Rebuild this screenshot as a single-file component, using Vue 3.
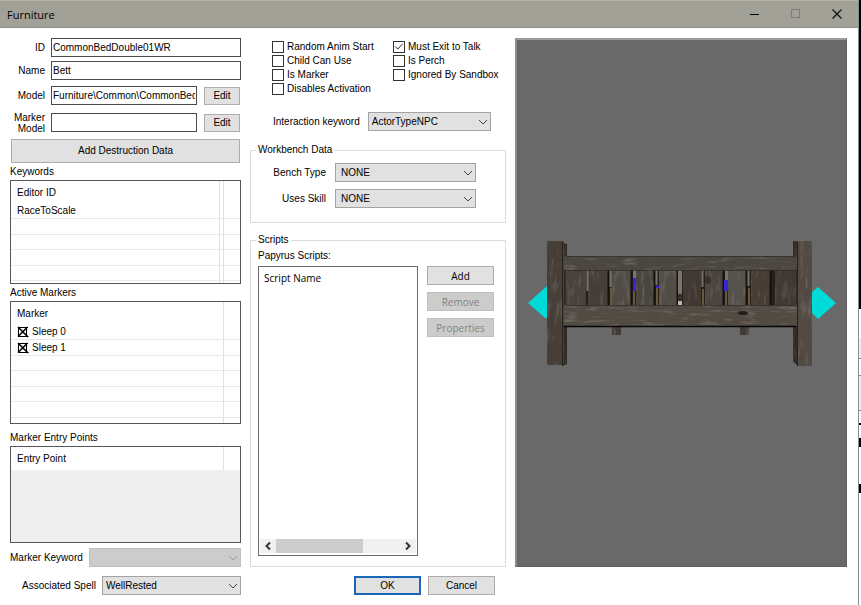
<script setup>
import { ref } from 'vue'

const form = ref({
  id: 'CommonBedDouble01WR',
  name: 'Bett',
  model: 'Furniture\\Common\\CommonBedDouble01.nif',
  markerModel: '',
})

const flags = ref([
  { label: 'Random Anim Start', on: false },
  { label: 'Must Exit to Talk', on: true },
  { label: 'Child Can Use', on: false },
  { label: 'Is Perch', on: false },
  { label: 'Is Marker', on: false },
  { label: 'Ignored By Sandbox', on: false },
  { label: 'Disables Activation', on: false },
])

const keywords = ['RaceToScale', '', '', '', '', '']
const markers = ['Sleep 0', 'Sleep 1', '', '', '', '', '']

// Headboard planks: left edge, width and shade
const planks = [
  [566, 20, '#49423c'], [588, 20, '#453e38'], [611, 20, '#514b45'],
  [636, 19, '#4b453f'], [659, 18, '#524c46'], [683, 18, '#403831'],
  [705, 18, '#4a443f'], [728, 19, '#55514b'], [751, 20, '#463e36'], [775, 21, '#403831'],
]
const gaps = [609, 632, 655, 678, 724, 747, 771]
</script>

<template>
  <div class="screen">
    <main class="dialog">
      <header class="titlebar">
        <h1>Furniture</h1>
        <button class="winbtn" type="button" aria-label="Minimize">
          <svg width="12" height="12" viewBox="0 0 12 12"><path d="M1 6.500h9" stroke="#000" /></svg>
        </button>
        <button class="winbtn" type="button" aria-label="Maximize" disabled>
          <svg width="12" height="12" viewBox="0 0 12 12"><rect x="1.500" y="1.500" width="8" height="8" fill="none" stroke="#7d7d75" /></svg>
        </button>
        <button class="winbtn" type="button" aria-label="Close">
          <svg width="12" height="12" viewBox="0 0 12 12"><path d="M1.500 1.500l9 9M10.500 1.500l-9 9" stroke="#111" stroke-width="1.200" /></svg>
        </button>
      </header>

      <form class="content" @submit.prevent>
        <section class="left">
          <div class="fields plain">
            <label for="fid">ID</label><input id="fid" v-model="form.id" type="text" />
            <label for="fname">Name</label><input id="fname" v-model="form.name" type="text" />
          </div>
          <div class="fields paths">
            <label for="fmodel">Model</label><input id="fmodel" v-model="form.model" type="text" />
            <button class="btn" type="button">Edit</button>
            <label for="fmarker">Marker Model</label><input id="fmarker" v-model="form.markerModel" type="text" />
            <button class="btn" type="button">Edit</button>
          </div>
          <button class="btn destruction" type="button">Add Destruction Data</button>

          <h2>Keywords</h2>
          <div class="list keywords">
            <table>
              <thead><tr><th>Editor ID</th><th class="slim"></th><th class="tail"></th></tr></thead>
              <tbody>
                <tr v-for="(k, i) in keywords" :key="i"><td>{{ k }}</td><td></td><td></td></tr>
              </tbody>
            </table>
          </div>

          <h2>Active Markers</h2>
          <div class="list markers">
            <table>
              <thead><tr><th>Marker</th><th class="tail"></th></tr></thead>
              <tbody>
                <tr v-for="(m, i) in markers" :key="i">
                  <td>
                    <span v-if="m" class="marker">
                      <svg width="12" height="12" viewBox="0 0 12 12" fill="none" stroke="#000">
                        <path d="M1.500 1v9.500M1 1.500h10M9.500 1v9.500M1 10.500h10.500" />
                        <path d="M1 1l10 10M10.500 1L1 10.500" stroke-width="1.600" />
                      </svg>
                      {{ m }}
                    </span>
                  </td>
                  <td></td>
                </tr>
              </tbody>
            </table>
          </div>

          <h2>Marker Entry Points</h2>
          <div class="list entries">
            <table>
              <thead><tr><th>Entry Point</th><th class="tail"></th></tr></thead>
            </table>
          </div>

          <div class="pick">
            <label for="mkey">Marker Keyword</label>
            <span class="combo off">
              <select id="mkey" disabled><option></option></select>
              <svg width="10" height="6" viewBox="0 0 10 6"><path d="M1 1l4 4 4-4" /></svg>
            </span>
          </div>
          <div class="pick spell">
            <label for="spell">Associated Spell</label>
            <span class="combo">
              <select id="spell"><option>WellRested</option></select>
              <svg width="10" height="6" viewBox="0 0 10 6"><path d="M1 1l4 4 4-4" /></svg>
            </span>
          </div>
        </section>

        <section class="middle">
          <div class="flags">
            <label v-for="f in flags" :key="f.label"><input v-model="f.on" type="checkbox" />
              <svg width="12" height="12" viewBox="0 0 12 12"><path v-if="f.on" d="M1.500 5.500l3 3 6-6.500" fill="none" stroke="#222" stroke-width="1.200" /></svg>
              {{ f.label }}</label>
          </div>

          <div class="pick interaction">
            <label for="ikey">Interaction keyword</label>
            <span class="combo">
              <select id="ikey"><option>ActorTypeNPC</option></select>
              <svg width="10" height="6" viewBox="0 0 10 6"><path d="M1 1l4 4 4-4" /></svg>
            </span>
          </div>

          <fieldset class="bench">
            <legend>Workbench Data</legend>
            <label for="btype">Bench Type</label>
            <span class="combo">
              <select id="btype"><option>NONE</option></select>
              <svg width="10" height="6" viewBox="0 0 10 6"><path d="M1 1l4 4 4-4" /></svg>
            </span>
            <label for="skill">Uses Skill</label>
            <span class="combo">
              <select id="skill"><option>NONE</option></select>
              <svg width="10" height="6" viewBox="0 0 10 6"><path d="M1 1l4 4 4-4" /></svg>
            </span>
          </fieldset>

          <fieldset class="scripts">
            <legend>Scripts</legend>
            <div class="scriptbox">
              <p>Papyrus Scripts:</p>
              <div class="scriptrow">
                <div class="scriptlist">
                  <span class="head">Script Name</span>
                  <div class="scroll">
                    <svg width="16" height="14" viewBox="0 0 16 14"><path d="M10 3.500L6.500 7l3.500 3.500" /></svg>
                    <div class="track"><div class="thumb"></div></div>
                    <svg width="16" height="14" viewBox="0 0 16 14"><path d="M6 3.500L9.500 7 6 10.500" /></svg>
                  </div>
                </div>
                <div class="actions">
                  <button class="btn smooth" type="button">Add</button>
                  <button class="btn smooth" type="button" disabled>Remove</button>
                  <button class="btn smooth" type="button" disabled>Properties</button>
                </div>
              </div>
            </div>
          </fieldset>

          <div class="confirm">
            <button class="btn ok" type="submit">OK</button>
            <button class="btn" type="button">Cancel</button>
          </div>
        </section>

        <section class="preview" aria-label="Preview">
          <svg width="310" height="128" viewBox="527 239 310 128">
            <defs>
              <filter id="grainH" x="0" y="0" width="1" height="1" color-interpolation-filters="sRGB">
                <feTurbulence type="fractalNoise" baseFrequency="0.05 0.3" numOctaves="4" seed="4" />
                <feColorMatrix values="0.34 0 0 0 -0.18  0.34 0 0 0 -0.18  0.34 0 0 0 -0.18  0 0 0 0 1" result="n" />
                <feComposite in="SourceGraphic" in2="n" operator="arithmetic" k2="1" k3="1" />
                <feComposite in2="SourceGraphic" operator="in" />
              </filter>
              <filter id="grainV" x="0" y="0" width="1" height="1" color-interpolation-filters="sRGB">
                <feTurbulence type="fractalNoise" baseFrequency="0.22 0.05" numOctaves="4" seed="9" />
                <feColorMatrix values="0.34 0 0 0 -0.18  0.34 0 0 0 -0.18  0.34 0 0 0 -0.18  0 0 0 0 1" result="n" />
                <feComposite in="SourceGraphic" in2="n" operator="arithmetic" k2="1" k3="1" />
                <feComposite in2="SourceGraphic" operator="in" />
              </filter>
            </defs>
            <path d="M528 303l19-17v32h-2z" fill="#00dbd8" />
            <path d="M812 292l6-5 18 16-18 16-6-6z" fill="#00dbd8" />
            <path d="M565 269h231v37H565z" fill="#25201c" />
            <g filter="url(#grainV)">
              <path d="M612 326h9v9h-9zM740 326h9v9h-9z" fill="#403b35" />
              <path d="M562 243l5 1v120l-5 2zM793 241h4v124l-4-4z" fill="#302b26" />
              <rect v-for="p in planks" :key="p[0]" :x="p[0]" y="269" :width="p[1]" height="37" :fill="p[2]" />
            </g>
            <path v-for="g in gaps" :key="g" :d="`M${g - .5} 270v35`" stroke="#14110e" stroke-width="2" />
            <path d="M587.500 270v21M610.500 270v17M656.500 270v15M702.500 270v17M748.500 270v16" stroke="#77736f" stroke-width="2" />
            <path d="M633 270h3v8h-3zM678 270h4v24h-4zM725 270h3v10h-3z" fill="#77756f" />
            <path d="M610 288h2v17h-2zM633 291h2v14h-2zM656 288h2v17h-2zM702 289h2v16h-2zM725 291h2v14h-2zM748 288h2v17h-2z" fill="#695740" />
            <path d="M633 278h3v13h-3zM656 286h3v2h-3zM724 280h4v11h-4z" fill="#3525dc" />
            <path d="M678 294h4v7h-4z" fill="#33312f" />
            <path d="M678 301h4v4h-4z" fill="#b9b5af" />
            <g filter="url(#grainH)">
              <path d="M564 256h234v14H564z" fill="#4b4640" />
              <path d="M563 305h234v21H563z" fill="#514b44" />
            </g>
            <path d="M566 256.500h230M566 270.500h230M566 305.500h230" stroke="#2e2924" stroke-opacity=".7" />
            <path d="M562 326.500h234" stroke="#070605" stroke-width="1.500" />
            <ellipse cx="743" cy="313" rx="5" ry="2" fill="#241e19" />
            <ellipse cx="708" cy="280" rx="3" ry="4" fill="#3a2f28" />
            <g filter="url(#grainV)">
              <path d="M547 241h16l1 3v121h-17z" fill="#463f38" />
              <path d="M797 241h15v125h-15z" fill="#514a43" />
            </g>
            <path d="M562.500 242v124M797.500 242v124" stroke="#25211d" />
          </svg>
        </section>
      </form>
    </main>
    <div class="backdrop"></div>
  </div>
</template>

<style>
body { margin: 0; background: #fff; }
</style>

<style scoped>
* { box-sizing: border-box; }
.screen {
  display: flex;
  min-height: 100vh;
  font: 10px/12px "Liberation Sans", sans-serif;
  color: #000;
}
.dialog { flex: 1; min-width: 0; background: #fff; }
.backdrop {
  width: 3px;
  border-left: 1px solid #8c8c8c;
  background: linear-gradient(#000 309px, #fff 309px 338px, #eee 338px 358px, #888 358px 359px, #fff 359px 375px, #888 375px 376px, #eee 376px 410px, #888 410px 411px, #fff 411px 423px, #000 423px 425px, #fff 425px 438px, #000 438px 447px, #fff 447px 484px, #000 484px 493px, #fff 493px);
}
.titlebar {
  display: flex;
  align-items: stretch;
  height: 28px;
  padding: 0 1px 0 7px;
  background: #a1a198;
  border-top: 1px solid #b5b5ac;
  border-bottom: 1px solid #92928a;
}
h1 {
  flex: 1;
  margin: 0;
  font: 11px/27px "Open Sans", sans-serif;
}
.winbtn {
  display: flex;
  align-items: center;
  justify-content: center;
  width: 41px;
  padding: 0;
  border: 0;
  background: none;
}
.content {
  display: grid;
  grid-template-columns: 231px 256px 1fr;
  gap: 9px;
  padding: 10px 11px 10px 10px;
}
.left, .middle { display: flex; flex-direction: column; min-width: 0; }
input, select, button { font: inherit; color: inherit; margin: 0; border-radius: 0; }

.fields { display: grid; align-items: center; column-gap: 6px; grid-auto-rows: 19px; }
.plain { grid-template-columns: 35px 1fr; row-gap: 4px; }
.paths { grid-template-columns: 35px 146px 1fr; row-gap: 8px; margin-top: 6px; }
.fields label { text-align: right; line-height: 11px; }
.fields .btn { margin: 0 1px; height: 18px; }
input[type="text"] {
  width: 100%;
  height: 19px;
  padding: 0 1px;
  border: 1px solid #4c4c4c;
  background: #fff;
  outline: none;
}
.btn {
  height: 19px;
  padding: 0;
  border: 1px solid #adadad;
  background: #e1e1e1;
  text-align: center;
}
.btn:disabled { background: #ccc; border-color: #bfbfbf; color: #838383; }
.smooth { font-family: "Open Sans", sans-serif; }
.destruction { height: 24px; margin: 7px 1px 0; }

h2 { margin: 0; font: inherit; line-height: 16px; }
.destruction + h2 { margin-top: 1px; }
.list { border: 1px solid #55555a; background: #fff; overflow: hidden; }
.keywords { height: 104px; margin-bottom: 1px; }
.markers { height: 123px; margin-bottom: 6px; }
.entries { height: 97px; background: #efefef; }
.list table { width: 100%; table-layout: fixed; border-collapse: separate; border-spacing: 0; }
.list thead { background: #fff; }
th, td { padding: 0 0 0 6px; text-align: left; font-weight: normal; white-space: nowrap; }
th { height: 23px; }
td { height: 15px; line-height: 14px; border-bottom: 1px solid #e8e8e8; }
tr:nth-child(even) td { height: 16px; }
th + th, td + td { padding: 0; border-left: 1px solid #e0e0e0; }
.slim { width: 4px; }
.tail { width: 17px; }
.marker { display: flex; align-items: center; gap: 3px; height: 14px; }

.pick { display: flex; align-items: center; gap: 6px; margin-top: 5px; }
.pick .combo { flex: 1; }
.spell { margin-top: 9px; padding-left: 12px; }
.combo { position: relative; display: block; height: 19px; }
.combo select {
  display: block;
  width: 100%;
  height: 19px;
  padding: 0 3px;
  appearance: none;
  border: 1px solid #a3a3a3;
  background: #e1e1e1;
}
.combo svg {
  position: absolute;
  right: 3px;
  top: 7px;
  fill: none;
  stroke: #444;
  pointer-events: none;
}
.combo.off select { background: #ccc; border-color: #bfbfbf; opacity: 1; }
.combo.off svg { stroke: #999; }

.flags {
  display: grid;
  grid-template-columns: 121px 1fr;
  grid-auto-rows: 14px;
  padding: 2px 0 0 22px;
}
.flags label { display: flex; align-items: center; gap: 3px; white-space: nowrap; }
.flags input { position: absolute; opacity: 0; width: 12px; height: 12px; }
.flags svg { border: 1px solid #333; background: #fff; }
.interaction { margin-top: 16px; padding: 0 15px 0 23px; gap: 8px; }

fieldset { margin: 0; min-width: 0; border: 1px solid #dcdcdc; }
legend { margin-left: 5px; padding: 0 2px; }
.bench {
  display: grid;
  grid-template-columns: 75px 141px;
  gap: 7px 9px;
  align-items: center;
  margin-top: 13px;
  padding: 7px 0 14px;
}
.bench label { text-align: right; }
.bench select { padding-left: 5px; }
.scripts {
  flex: 1;
  display: flex;
  margin-top: 11px;
  padding: 0;
}
.scriptbox {
  flex: 1;
  display: flex;
  flex-direction: column;
  padding: 4px 11px 10px 7px;
}
.scripts p { margin: 0 0 4px; }
.scriptrow { flex: 1; display: flex; gap: 9px; }
.scriptlist {
  flex: 1;
  display: flex;
  flex-direction: column;
  justify-content: space-between;
  border: 1px solid #6a6a6e;
  padding: 5px 1px 2px;
}
.head { padding-left: 4px; font-family: "Open Sans", sans-serif; }
.scroll { display: flex; height: 14px; background: #f0f0f0; }
.scroll svg { fill: none; stroke: #333; stroke-width: 2; }
.track { flex: 1; }
.thumb { width: 70%; height: 100%; background: #cdcdcd; }
.actions { display: flex; flex-direction: column; gap: 7px; width: 67px; }
.confirm { display: flex; justify-content: flex-end; gap: 7px; margin-top: 9px; padding-right: 11px; }
.confirm .btn { width: 67px; }
.confirm .ok { border: 2px solid #1a66b8; }

.preview {
  display: flex;
  align-items: center;
  justify-content: center;
  margin-bottom: 28px;
  min-width: 0;
  background: #696969;
  border: 1px solid #5f5f5f;
  border-top: 2px solid #9c9c9c;
  border-left: 2px solid #8c8c8c;
}
</style>
